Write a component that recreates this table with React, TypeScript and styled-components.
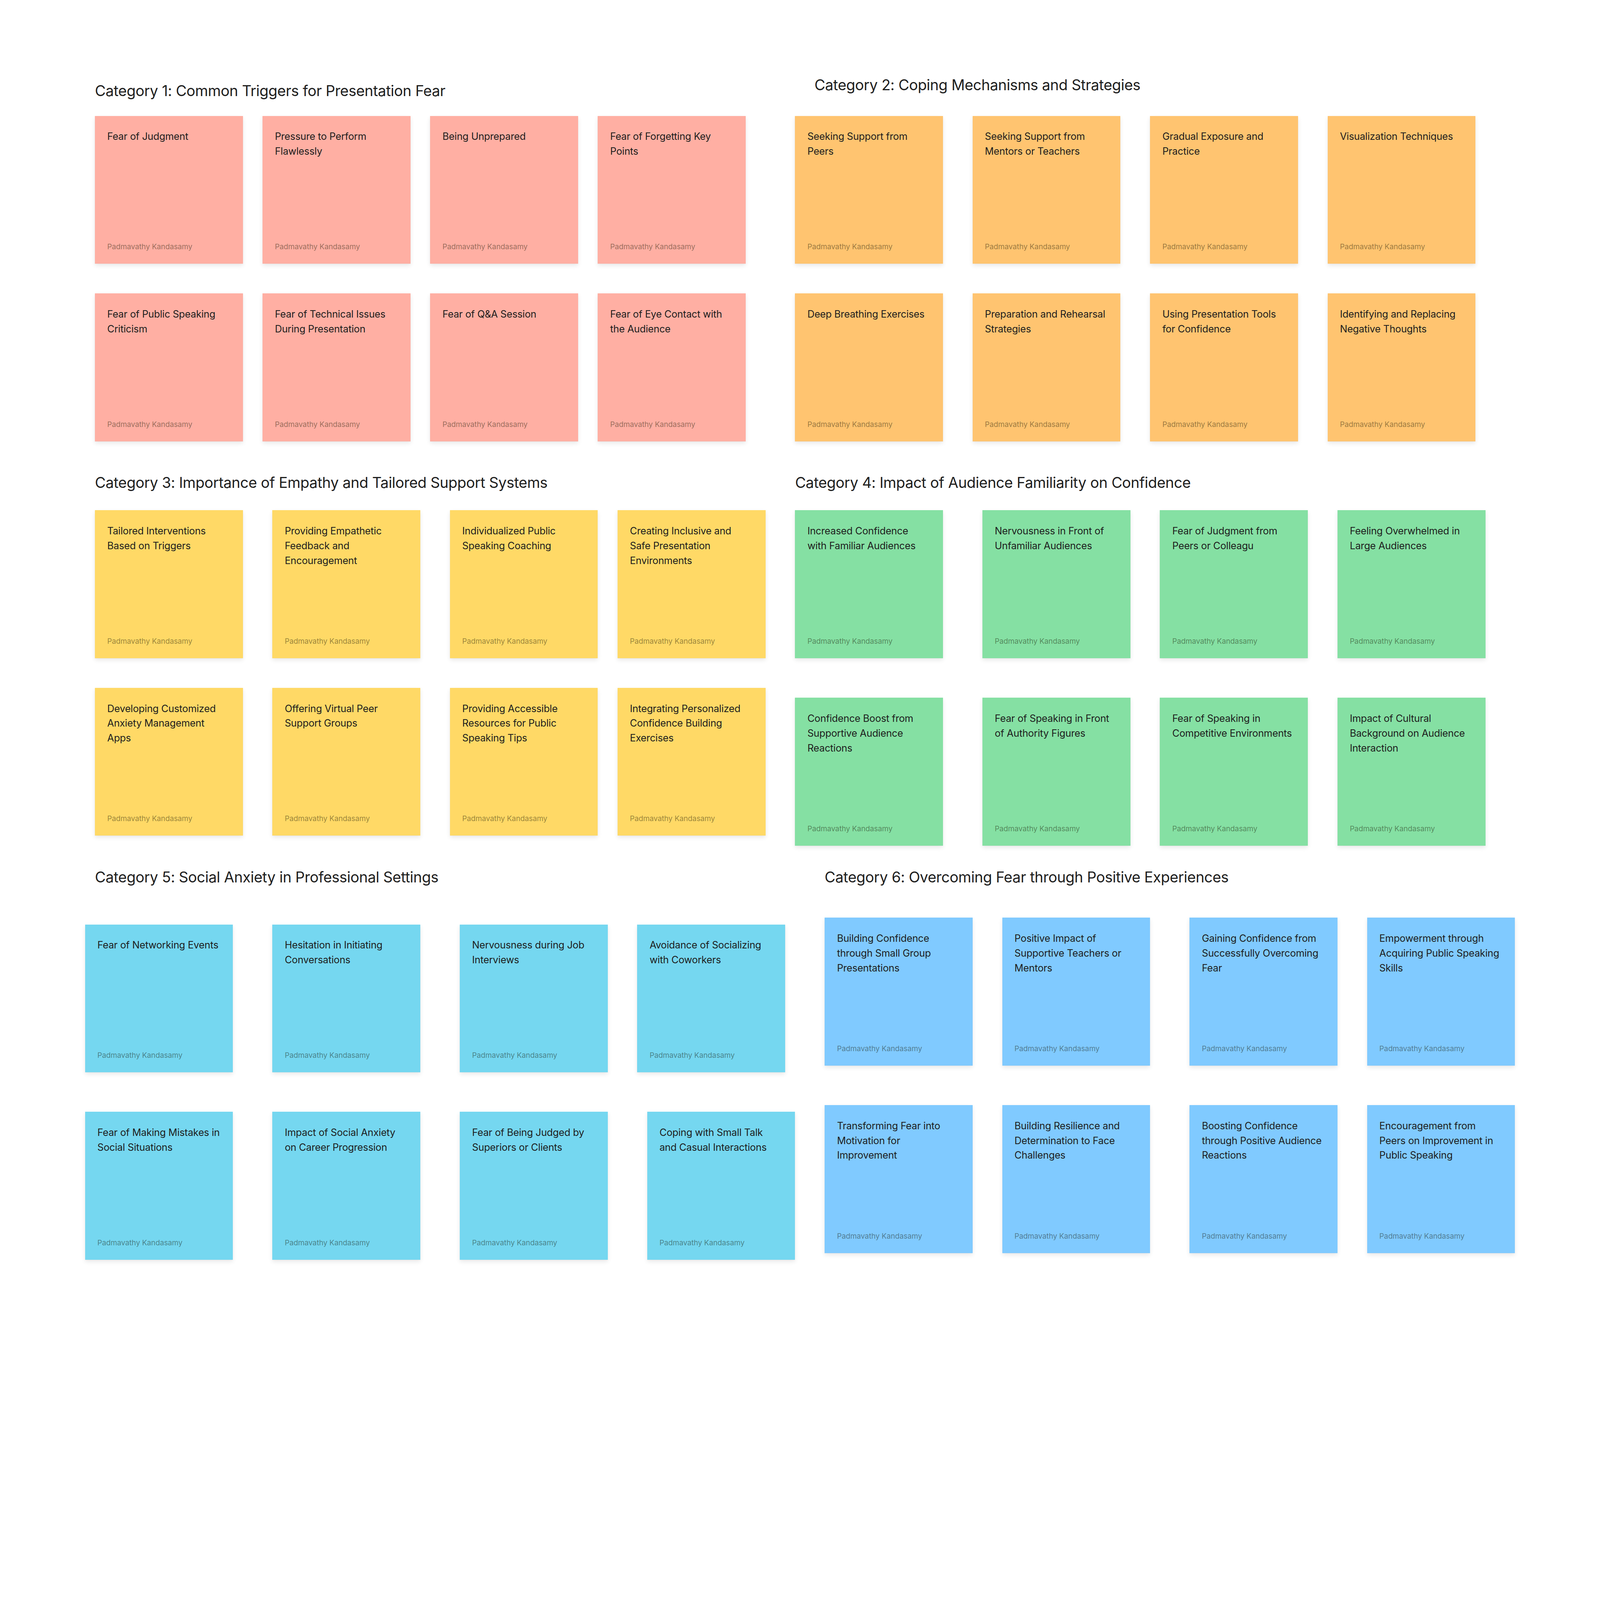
import React, { useEffect, useState } from 'react';
import styled, { createGlobalStyle } from 'styled-components';

const GlobalStyle = createGlobalStyle`
  html, body {
    margin: 0;
    padding: 0;
    background: #ffffff;
    overflow: hidden;
  }
  body {
    font-family: Inter, "Noto Sans", "Liberation Sans", sans-serif;
    color: #1e1e1e;
  }
`;

const AUTHOR = 'Padmavathy Kandasamy';

const BOARD_W = 5192;
const BOARD_H = 4380;
const NOTE_SIZE = 480;

const COLORS = {
  red: '#ffafa3',
  orange: '#ffc470',
  yellow: '#ffd966',
  green: '#85e0a3',
  teal: '#75d7f0',
  blue: '#80caff',
};

interface ICategory {
  title: string;
  x: number;
  y: number;
  indent: number;
  titleGap: number;
  rowGap: number;
  color: string;
  // left edge of each note, relative to the section, one list per row
  columns: number[][];
  notes: string[][];
}

const categories: ICategory[] = [
  {
    title: 'Category 1: Common Triggers for Presentation Fear',
    x: 308,
    y: 266,
    indent: 0,
    titleGap: 52,
    rowGap: 96,
    color: COLORS.red,
    columns: [
      [0, 544, 1088, 1632],
      [0, 544, 1088, 1632],
    ],
    notes: [
      ['Fear of Judgment', 'Pressure to Perform\nFlawlessly', 'Being Unprepared', 'Fear of Forgetting Key\nPoints'],
      ['Fear of Public Speaking\nCriticism', 'Fear of Technical Issues\nDuring Presentation', 'Fear of Q&A Session', 'Fear of Eye Contact with\nthe Audience'],
    ],
  },
  {
    title: 'Category 2: Coping Mechanisms and Strategies',
    x: 2580,
    y: 247,
    indent: 63,
    titleGap: 71,
    rowGap: 96,
    color: COLORS.orange,
    columns: [
      [0, 576, 1152, 1728],
      [0, 576, 1152, 1728],
    ],
    notes: [
      ['Seeking Support from\nPeers', 'Seeking Support from\nMentors or Teachers', 'Gradual Exposure and\nPractice', 'Visualization Techniques'],
      ['Deep Breathing Exercises', 'Preparation and Rehearsal\nStrategies', 'Using Presentation Tools\nfor Confidence', 'Identifying and Replacing\nNegative Thoughts'],
    ],
  },
  {
    title: 'Category 3: Importance of Empathy and Tailored Support Systems',
    x: 308,
    y: 1538,
    indent: 0,
    titleGap: 60,
    rowGap: 96,
    color: COLORS.yellow,
    columns: [
      [0, 576, 1152, 1696],
      [0, 576, 1152, 1696],
    ],
    notes: [
      ['Tailored Interventions\nBased on Triggers', 'Providing Empathetic\nFeedback and\nEncouragement', 'Individualized Public\nSpeaking Coaching', 'Creating Inclusive and\nSafe Presentation\nEnvironments'],
      ['Developing Customized\nAnxiety Management\nApps', 'Offering Virtual Peer\nSupport Groups', 'Providing Accessible\nResources for Public\nSpeaking Tips', 'Integrating Personalized\nConfidence Building\nExercises'],
    ],
  },
  {
    title: 'Category 4: Impact of Audience Familiarity on Confidence',
    x: 2580,
    y: 1538,
    indent: 0,
    titleGap: 60,
    rowGap: 128,
    color: COLORS.green,
    columns: [
      [0, 608, 1184, 1760],
      [0, 608, 1184, 1760],
    ],
    notes: [
      ['Increased Confidence\nwith Familiar Audiences', 'Nervousness in Front of\nUnfamiliar Audiences', 'Fear of Judgment from\nPeers or Colleagu', 'Feeling Overwhelmed in\nLarge Audiences'],
      ['Confidence Boost from\nSupportive Audience\nReactions', 'Fear of Speaking in Front\nof Authority Figures', 'Fear of Speaking in\nCompetitive Environments', 'Impact of Cultural\nBackground on Audience\nInteraction'],
    ],
  },
  {
    title: 'Category 5: Social Anxiety in Professional Settings',
    x: 276,
    y: 2818,
    indent: 32,
    titleGap: 124,
    rowGap: 128,
    color: COLORS.teal,
    columns: [
      [0, 608, 1216, 1792],
      [0, 608, 1216, 1824],
    ],
    notes: [
      ['Fear of Networking Events', 'Hesitation in Initiating\nConversations', 'Nervousness during Job\nInterviews', 'Avoidance of Socializing\nwith Coworkers'],
      ['Fear of Making Mistakes in\nSocial Situations', 'Impact of Social Anxiety\non Career Progression', 'Fear of Being Judged by\nSuperiors or Clients', 'Coping with Small Talk\nand Casual Interactions'],
    ],
  },
  {
    title: 'Category 6: Overcoming Fear through Positive Experiences',
    x: 2676,
    y: 2818,
    indent: 0,
    titleGap: 102,
    rowGap: 128,
    color: COLORS.blue,
    columns: [
      [0, 576, 1184, 1760],
      [0, 576, 1184, 1760],
    ],
    notes: [
      ['Building Confidence\nthrough Small Group\nPresentations', 'Positive Impact of\nSupportive Teachers or\nMentors', 'Gaining Confidence from\nSuccessfully Overcoming\nFear', 'Empowerment through\nAcquiring Public Speaking\nSkills'],
      ['Transforming Fear into\nMotivation for\nImprovement', 'Building Resilience and\nDetermination to Face\nChallenges', 'Boosting Confidence\nthrough Positive Audience\nReactions', 'Encouragement from\nPeers on Improvement in\nPublic Speaking'],
    ],
  },
];

const Board = styled.div`
  position: relative;
  width: ${BOARD_W}px;
  height: ${BOARD_H}px;
  overflow: hidden;
  background: #ffffff;
`;

/* sections sit on the whiteboard canvas at their own spot */
const Section = styled.section<{ $x: number; $y: number }>`
  position: absolute;
  left: ${(p) => p.$x}px;
  top: ${(p) => p.$y}px;
  display: flex;
  flex-direction: column;
`;

const SectionTitle = styled.h2<{ $indent: number; $gap: number }>`
  margin: 0 0 ${(p) => p.$gap}px ${(p) => p.$indent}px;
  font-size: 48px;
  line-height: 58px;
  font-weight: 400;
  color: #1e1e1e;
  white-space: nowrap;
  letter-spacing: -0.012em;
`;

const NoteGrid = styled.div<{ $rowGap: number }>`
  display: flex;
  flex-direction: column;
  gap: ${(p) => p.$rowGap}px;
`;

const NoteRow = styled.div`
  display: flex;
  align-items: flex-start;
`;

const Sticky = styled.div<{ $color: string; $offset: number }>`
  box-sizing: border-box;
  flex: none;
  width: ${NOTE_SIZE}px;
  height: ${NOTE_SIZE}px;
  margin-left: ${(p) => p.$offset}px;
  padding: 44px 40px 39px 40px;
  display: flex;
  flex-direction: column;
  justify-content: space-between;
  background: ${(p) => p.$color};
  box-shadow: 0 1px 2px rgba(0, 0, 0, 0.08), 0 6px 14px rgba(0, 0, 0, 0.09);
`;

const StickyText = styled.p`
  margin: 0;
  font-size: 32px;
  line-height: 48px;
  font-weight: 400;
  color: #1e1e1e;
  white-space: pre;
  letter-spacing: -0.01em;
`;

const StickyAuthor = styled.span`
  font-size: 24px;
  line-height: 32px;
  color: rgba(20, 20, 0, 0.45);
  white-space: nowrap;
  letter-spacing: -0.005em;
`;

const Category = ({ data }: { data: ICategory }) => (
  <Section $x={data.x} $y={data.y}>
    <SectionTitle $indent={data.indent} $gap={data.titleGap}>
      {data.title}
    </SectionTitle>
    <NoteGrid $rowGap={data.rowGap}>
      {data.notes.map((row, r) => (
        <NoteRow key={r}>
          {row.map((text, i) => {
            const cols = data.columns[r];
            const offset = i === 0 ? 0 : cols[i] - cols[i - 1] - NOTE_SIZE;
            return (
              <Sticky key={i} $color={data.color} $offset={offset}>
                <StickyText>{text}</StickyText>
                <StickyAuthor>{AUTHOR}</StickyAuthor>
              </Sticky>
            );
          })}
        </NoteRow>
      ))}
    </NoteGrid>
  </Section>
);

// fit the whole board into whatever viewport we get
const fitScale = () =>
  Math.min(1, window.innerWidth / BOARD_W, window.innerHeight / BOARD_H);

export default function App() {
  const [scale, setScale] = useState(fitScale);

  useEffect(() => {
    const onResize = () => setScale(fitScale());
    window.addEventListener('resize', onResize);
    return () => window.removeEventListener('resize', onResize);
  }, []);

  return (
    <>
      <GlobalStyle />
      <Board style={{ zoom: scale }}>
        {categories.map((c) => (
          <Category key={c.title} data={c} />
        ))}
      </Board>
    </>
  );
}
